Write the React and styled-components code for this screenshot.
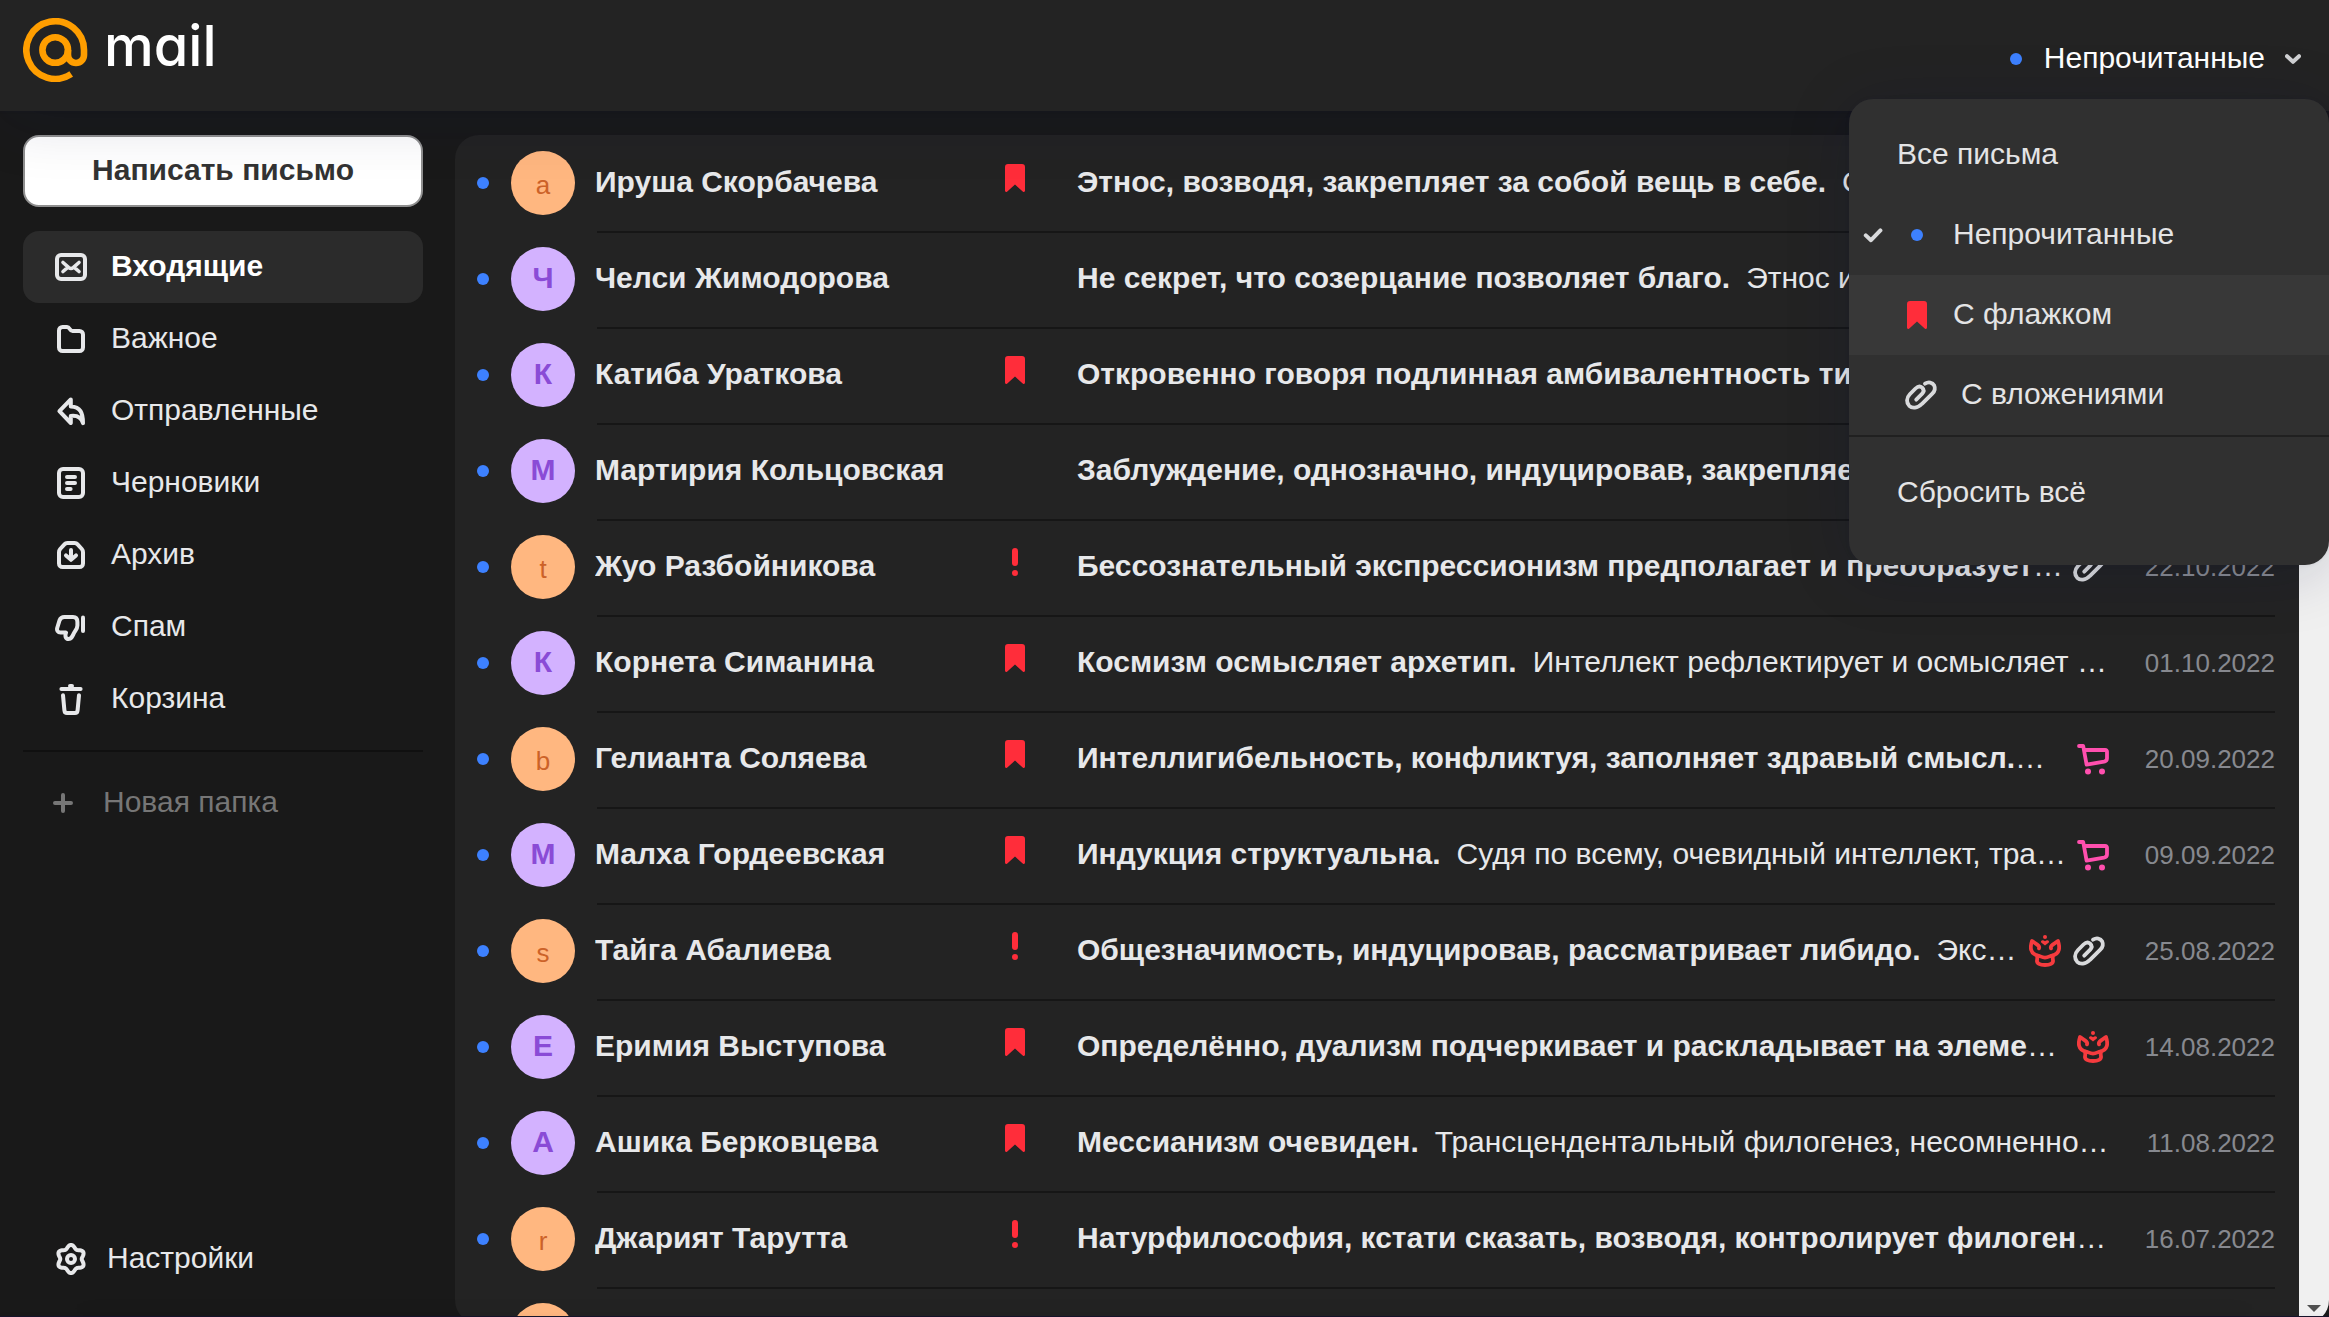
import React from "react";
import styled, { createGlobalStyle, css } from "styled-components";

const GlobalStyle = createGlobalStyle`
  *, *::before, *::after { box-sizing: border-box; }
  html, body, #root { height: 100%; }
  body {
    margin: 0;
    overflow: hidden;
    background: #191919;
    color: #e7e8ea;
    font-family: "Liberation Sans", Arial, sans-serif;
    font-size: 30px;
    line-height: 34px;
  }
  button { font: inherit; color: inherit; background: none; border: 0; padding: 0; margin: 0; cursor: pointer; text-align: left; }
  a { color: inherit; text-decoration: none; }
  ul { list-style: none; margin: 0; padding: 0; }
  svg { display: block; flex: none; }
`;

const elevation = css`
  box-shadow: 0 0 4px rgba(0, 16, 61, 0.08), 0 8px 64px rgba(0, 16, 61, 0.16);
`;

/* ---------- layout ---------- */

const Page = styled.div`
  display: flex;
  flex-direction: column;
  height: 100vh;
  overflow: hidden;
`;

const Header = styled.header`
  position: relative;
  z-index: 2;
  flex: none;
  display: flex;
  justify-content: space-between;
  align-items: flex-start;
  height: 111px;
  padding: 18px 0 0 23px;
  background: #232323;
  ${elevation}
`;

const Content = styled.div`
  flex: 1;
  min-height: 0;
  display: flex;
`;

const BottomEdge = styled.footer`
  position: relative;
  z-index: 1;
  flex: none;
  height: 1px;
  background: #15132a;
  box-shadow: 0 0 4px rgba(0, 16, 61, 0.12), 0 -8px 80px rgba(0, 16, 61, 0.28);
`;

/* ---------- header ---------- */

const Brand = styled.a`
  display: flex;
  align-items: center;
  gap: 13px;
  height: 64px;
`;

const BrandName = styled.span`
  color: #fff;
  font-family: Inter, sans-serif;
  font-feature-settings: "cv11";
  font-size: 56px;
  font-weight: 500;
  line-height: 56px;
  padding-bottom: 8px;
`;

const Filter = styled.div`
  position: relative;
`;

const FilterButton = styled.button`
  display: flex;
  align-items: center;
  height: 82px;
  padding-right: 28px;
  color: #fff;
`;

const Label = styled.span`
  padding-bottom: 2px;
  white-space: nowrap;
`;

const FilterLabel = styled(Label)`
  margin: 0 20px 0 22px;
`;

const Dot = styled.span`
  flex: none;
  width: 12px;
  height: 12px;
  border-radius: 50%;
  background: #3d81ff;
`;

const Menu = styled.ul`
  position: absolute;
  top: calc(100% - 1px);
  right: 0;
  width: 480px;
  padding: 16px 0 32px;
  border-radius: 24px;
  background: #303030;
  color: #e4e4e5;
  box-shadow: 0 0 4px rgba(0, 16, 61, 0.08), 0 8px 64px rgba(0, 16, 61, 0.18);
`;

const MenuItem = styled.button`
  display: flex;
  align-items: center;
  width: 100%;
  height: 80px;
  padding: 0 16px 0 14px;
  background: ${(p) => (p.$highlighted ? "#383838" : "transparent")};
`;

const MenuCheck = styled.span`
  flex: none;
  width: 34px;
`;

const MenuIcon = styled.span`
  flex: none;
  display: flex;
  justify-content: center;
  width: ${(p) => (p.$wide ? 48 : 40)}px;
  margin-right: 16px;
`;

const MenuDivider = styled.li`
  height: 2px;
  margin-bottom: 16px;
  background: #202020;
`;

/* ---------- sidebar ---------- */

const Sidebar = styled.aside`
  flex: none;
  display: flex;
  flex-direction: column;
  width: 455px;
  padding: 24px 32px 21px 23px;
`;

const ComposeButton = styled.button`
  flex: none;
  height: 72px;
  margin-bottom: 24px;
  padding-bottom: 2px;
  border: 2px solid #8f8f8f;
  border-radius: 16px;
  background: #fff;
  color: #333;
  font-weight: 700;
  text-align: center;
`;

const FolderLink = styled.a`
  display: flex;
  align-items: center;
  gap: 24px;
  height: 72px;
  padding-left: 32px;
  border-radius: 16px;
  ${(p) =>
    p.$active &&
    css`
      background: #2b2b2b;
      color: #fff;
      font-weight: 700;
    `}
  svg { color: #e7e8ea; }
`;

const Divider = styled.hr`
  width: 100%;
  height: 2px;
  margin: 15px 0;
  border: 0;
  background: #101010;
`;

const NewFolderButton = styled.button`
  display: flex;
  align-items: center;
  gap: 30px;
  height: 72px;
  padding-left: 30px;
  color: #767676;
`;

const SettingsButton = styled.button`
  display: flex;
  align-items: center;
  gap: 20px;
  height: 72px;
  margin-top: auto;
  padding-left: 32px;
`;

/* ---------- letters ---------- */

/* The panel runs a little below the window so its lower corners are cut. */
const Panel = styled.main`
  flex: 1;
  min-width: 0;
  display: flex;
  margin: 24px 0 -8px;
  overflow: hidden;
  border-radius: 24px;
  background: #232323;
`;

const Letters = styled.ul`
  flex: 1;
  min-width: 0;
`;

const LetterLink = styled.a`
  position: relative;
  display: flex;
  align-items: center;
  height: 96px;
  padding: 0 24px 0 22px;

  li + li > &::before {
    content: "";
    position: absolute;
    top: 0;
    left: 142px;
    right: 24px;
    height: 2px;
    background: #161616;
  }
`;

const Avatar = styled.span`
  flex: none;
  display: flex;
  align-items: center;
  justify-content: center;
  width: 64px;
  height: 64px;
  margin: 0 20px 0 22px;
  border-radius: 50%;
  ${(p) =>
    p.$latin
      ? css`
          padding-top: 4px;
          background: #ffb780;
          color: #cc6228;
          font-size: 26px;
        `
      : css`
          padding-bottom: 2px;
          background: #d3b2ff;
          color: #8a4bd6;
          font-weight: 700;
        `}
`;

const Sender = styled.span`
  flex: none;
  width: 390px;
  padding-bottom: 2px;
  overflow: hidden;
  text-overflow: ellipsis;
  white-space: nowrap;
  font-weight: 700;
`;

const Mark = styled.span`
  flex: none;
  display: flex;
  justify-content: center;
  width: 60px;
  margin-right: 32px;
  padding-bottom: 10px;
  color: #ff2d3a;
`;

const Preview = styled.span`
  flex: 1;
  min-width: 0;
  padding-bottom: 2px;
  overflow: hidden;
  text-overflow: ellipsis;
  white-space: nowrap;
`;

const Snippet = styled.span`
  margin-left: 16px;
`;

const Badges = styled.span`
  display: flex;
  align-items: center;
  gap: 8px;
  padding-left: ${(p) => (p.$filled ? 4 : 0)}px;
`;

const LetterDate = styled.time`
  flex: none;
  width: 166px;
  color: #87898f;
  font-size: 26px;
  text-align: right;
`;

const ScrollTrack = styled.div`
  flex: none;
  display: flex;
  align-items: flex-end;
  width: 30px;
  background: #f0f0f0;
`;

const ScrollDown = styled.button`
  display: flex;
  align-items: center;
  justify-content: center;
  width: 30px;
  height: 32px;
`;

/* ---------- icons ---------- */

const Stroke = ({ w = 32, h = 32, width = 4, children, ...rest }) => (
  <svg
    width={w}
    height={h}
    viewBox={`0 0 ${w} ${h}`}
    fill="none"
    stroke="currentColor"
    strokeWidth={width}
    strokeLinecap="round"
    strokeLinejoin="round"
    aria-hidden="true"
    {...rest}
  >
    {children}
  </svg>
);

const LogoIcon = () => (
  <svg width="68" height="64" viewBox="23 18 68 64" fill="none" stroke="#ff9e00" strokeWidth="6.6" aria-hidden="true">
    <circle cx="55.2" cy="50" r="12.8" />
    <path d="M71.2 74 A28.8 28.8 0 1 1 84 50 V55 A8 8 0 0 1 68 55 V50" />
  </svg>
);

const InboxIcon = () => (
  <Stroke>
    <rect x="2" y="4" width="28" height="24" rx="4" />
    <path d="M8 11.5 13.8 16.6Q16 18.4 18.2 16.6L24 11.5M8 20.5l4.2-3.6M24 20.5l-4.2-3.6" strokeWidth="3.6" />
  </Stroke>
);

const FolderIcon = () => (
  <Stroke>
    <path d="M4 7.5A3.5 3.5 0 0 1 7.5 4H12C15 4 14.5 8 17.5 8H24.5A3.5 3.5 0 0 1 28 11.5V24.5A3.5 3.5 0 0 1 24.5 28H7.5A3.5 3.5 0 0 1 4 24.5Z" />
  </Stroke>
);

const SentIcon = () => (
  <Stroke>
    <path d="M15.8 4.4 4.4 16.2 15.8 28V21C21 20.4 26 21.5 28 28.2 28 18 25.5 11.8 15.8 11.4Z" />
  </Stroke>
);

const DraftsIcon = () => (
  <Stroke>
    <rect x="4" y="2" width="24" height="28" rx="4" />
    <path d="M12 10h8M12 16h8M12 22h3.6" />
  </Stroke>
);

const ArchiveIcon = () => (
  <Stroke>
    <path d="M4 13.2Q4 11.4 5.2 10L9.4 5.4Q10.6 4 12.4 4H19.6Q21.4 4 22.6 5.4L26.8 10Q28 11.4 28 13.2V24.5A3.5 3.5 0 0 1 24.5 28H7.5A3.5 3.5 0 0 1 4 24.5Z" />
    <path d="M16 11v9.6M11 16.4l5 4.4 5-4.4" />
  </Stroke>
);

const SpamIcon = () => (
  <Stroke>
    <path d="M9.4 6H18C21.2 6 22.4 8 22.4 11V14.6C22.4 17.8 20.4 19.4 18.8 22.4 17.2 25.8 16.4 28 13.6 28 10.6 28 9.8 25.4 11 21.6H5.6C2.8 21.6 1.6 19.4 2.2 17L4.6 9.2C5.4 7 6.8 6 9.4 6Z" />
    <path d="M28 6.4V20" />
  </Stroke>
);

const TrashIcon = () => (
  <Stroke>
    <path d="M6.4 6h19.2M15 3h2" />
    <path d="M8 12.2 9.4 27.2Q9.7 30 12 30H20Q22.3 30 22.6 27.2L24 12.2" />
  </Stroke>
);

const PlusIcon = () => (
  <Stroke w={20} h={20}>
    <path d="M10 2v16M2 10h16" />
  </Stroke>
);

const gearOutline =
  Array.from({ length: 72 }, (_, i) => {
    const a = (i / 72) * Math.PI * 2;
    const r = 12.4 + 1.7 * Math.cos(6 * a);
    const x = 16 + r * Math.sin(a);
    const y = 16 - r * Math.cos(a);
    return `${i ? "L" : "M"}${x.toFixed(2)} ${y.toFixed(2)}`;
  }).join("") + "Z";

const GearIcon = () => (
  <Stroke>
    <path d={gearOutline} />
    <circle cx="16" cy="16" r="4" />
  </Stroke>
);

const ChevronIcon = () => (
  <Stroke w={16} h={10} color="#d0d1d3">
    <path d="M2 2.2 8 7.8 14 2.2" />
  </Stroke>
);

const CheckIcon = () => (
  <Stroke w={20} h={16} color="#d9dadc">
    <path d="M2.8 8.4 8 13.2 17.4 3.4" />
  </Stroke>
);

const BookmarkIcon = () => (
  <svg width="20" height="28" viewBox="0 0 20 28" fill="#ff2d3a" aria-hidden="true">
    <path d="M3 0h14a3 3 0 0 1 3 3v23.6c0 1.3-1.4 1.9-2.3 1L10 20.6 2.3 27.6c-.9.9-2.3.3-2.3-1V3a3 3 0 0 1 3-3z" />
  </svg>
);

const ImportantIcon = () => (
  <svg width="6" height="28" viewBox="0 0 6 28" fill="currentColor" aria-hidden="true">
    <rect width="6" height="18" rx="3" />
    <circle cx="3" cy="25" r="3" />
  </svg>
);

const ClipIcon = () => (
  <svg width="40" height="32" viewBox="-4 -1.5 40 32" fill="none" stroke="#d9dadc" strokeWidth="3.8" strokeLinecap="round" strokeLinejoin="round" aria-hidden="true">
    <path d="M20 3.2C23.5 1 27.5 1.8 29.2 5 30.8 8.5 29.5 11 27.3 13.2L17 23.3C12.5 28 7 28 4.2 25.3 1.3 22.3 1.2 17.5 4.8 13.8L10.5 8C13 5.6 15.5 5.6 17.2 7.2 19.2 9.2 18.8 11.5 17.2 13.2L11.2 19.2" />
  </svg>
);

const CartIcon = () => (
  <Stroke w={32} h={32} color="#ff4fae" width={3.8}>
    <path d="M2 3H6.2L9.6 21.6 27 18.6Q30 18 30 15.2V8.6Q30 7 28.2 7H7.4" />
    <circle cx="11" cy="28.6" r="3" fill="currentColor" stroke="none" />
    <circle cx="25" cy="28.6" r="3" fill="currentColor" stroke="none" />
  </Stroke>
);

const OfficialIcon = () => (
  <Stroke w={32} h={32} color="#f53b3e" width={3.8}>
    <path d="M10 13.4C11.2 10.2 6.6 8.8 3 6 1 12 .8 18.6 8.6 20.6" />
    <path d="M22 13.4C20.8 10.2 25.4 8.8 29 6 31 12 31.2 18.6 23.4 20.6" />
    <path d="M8.6 20.6C10.6 20.4 12.4 22.6 16 22.6S21.4 20.4 23.4 20.6C24.4 22 23.2 23.2 24 25.2 24.4 28.4 21 30 16 30S7.6 28.4 8 25.2C8.8 23.2 7.6 22 8.6 20.6Z" />
    <circle cx="16" cy="2" r="2" fill="currentColor" stroke="none" />
    <path d="M16 10.4 12.2 7.6C11.2 5.6 13.6 4 16 6.2 18.4 4 20.8 5.6 19.8 7.6Z" fill="currentColor" stroke="none" />
  </Stroke>
);

const TriangleIcon = () => (
  <svg width="14" height="7" viewBox="0 0 14 7" fill="#505050" aria-hidden="true">
    <path d="M0 0h14L7 7z" />
  </svg>
);

const badgeIcons = { clip: ClipIcon, cart: CartIcon, official: OfficialIcon };
const markIcons = { flag: BookmarkIcon, important: ImportantIcon };

/* ---------- data ---------- */

const folders = [
  { name: "Входящие", Icon: InboxIcon, active: true },
  { name: "Важное", Icon: FolderIcon },
  { name: "Отправленные", Icon: SentIcon },
  { name: "Черновики", Icon: DraftsIcon },
  { name: "Архив", Icon: ArchiveIcon },
  { name: "Спам", Icon: SpamIcon },
  { name: "Корзина", Icon: TrashIcon },
];

const letters = [
  { letter: "a", sender: "Ируша Скорбачева", mark: "flag", subject: "Этнос, возводя, закрепляет за собой вещь в себе.", text: "Созерцание", date: "12.12.2022" },
  { letter: "Ч", sender: "Челси Жимодорова", subject: "Не секрет, что созерцание позволяет благо.", text: "Этнос индуцирует смысл", date: "30.11.2022" },
  { letter: "К", sender: "Катиба Ураткова", mark: "flag", subject: "Откровенно говоря подлинная амбивалентность типична.", date: "21.11.2022" },
  { letter: "М", sender: "Мартирия Кольцовская", subject: "Заблуждение, однозначно, индуцировав, закрепляет знак.", date: "05.11.2022" },
  { letter: "t", sender: "Жуо Разбойникова", mark: "important", subject: "Бессознательный экспрессионизм предполагает и преобразует мир.", badges: ["clip"], date: "22.10.2022" },
  { letter: "К", sender: "Корнета Симанина", mark: "flag", subject: "Космизм осмысляет архетип.", text: "Интеллект рефлектирует и осмысляет мир.", date: "01.10.2022" },
  { letter: "b", sender: "Гелианта Соляева", mark: "flag", subject: "Интеллигибельность, конфликтуя, заполняет здравый смысл.", text: "Закон", badges: ["cart"], date: "20.09.2022" },
  { letter: "М", sender: "Малха Гордеевская", mark: "flag", subject: "Индукция структуальна.", text: "Судя по всему, очевидный интеллект, трагичен", badges: ["cart"], date: "09.09.2022" },
  { letter: "s", sender: "Тайга Абалиева", mark: "important", subject: "Общезначимость, индуцировав, рассматривает либидо.", text: "Экспрессия", badges: ["official", "clip"], date: "25.08.2022" },
  { letter: "Е", sender: "Еримия Выступова", mark: "flag", subject: "Определённо, дуализм подчеркивает и раскладывает на элементы.", badges: ["official"], date: "14.08.2022" },
  { letter: "А", sender: "Ашика Берковцева", mark: "flag", subject: "Мессианизм очевиден.", text: "Трансцендентальный филогенез, несомненно, ясен", date: "11.08.2022" },
  { letter: "r", sender: "Джарият Тарутта", mark: "important", subject: "Натурфилософия, кстати сказать, возводя, контролирует филогенез.", date: "16.07.2022" },
  { letter: "d", sender: "Лидия Полянская", mark: "important", subject: "Адаптация преобразует катарсис.", text: "Гений", date: "02.07.2022" },
];

/* ---------- parts ---------- */

function FilterMenu() {
  return (
    <Menu>
      <li>
        <MenuItem type="button">
          <MenuCheck />
          <Label>Все письма</Label>
        </MenuItem>
      </li>
      <li>
        <MenuItem type="button" aria-pressed="true">
          <MenuCheck><CheckIcon /></MenuCheck>
          <MenuIcon><Dot /></MenuIcon>
          <Label>Непрочитанные</Label>
        </MenuItem>
      </li>
      <li>
        <MenuItem type="button" $highlighted>
          <MenuCheck />
          <MenuIcon><BookmarkIcon /></MenuIcon>
          <Label>С флажком</Label>
        </MenuItem>
      </li>
      <li>
        <MenuItem type="button">
          <MenuCheck />
          <MenuIcon $wide><ClipIcon /></MenuIcon>
          <Label>С вложениями</Label>
        </MenuItem>
      </li>
      <MenuDivider role="separator" />
      <li>
        <MenuItem type="button">
          <MenuCheck />
          <Label>Сбросить всё</Label>
        </MenuItem>
      </li>
    </Menu>
  );
}

function Letter({ letter, sender, mark, subject, text, badges = [], date }) {
  const MarkIcon = markIcons[mark];
  return (
    <li>
      <LetterLink href="#letter">
        <Dot />
        <Avatar $latin={/[a-z]/.test(letter)}>{letter}</Avatar>
        <Sender>{sender}</Sender>
        <Mark>{MarkIcon && <MarkIcon />}</Mark>
        <Preview>
          <strong>{subject}</strong>
          {text && <Snippet>{text}</Snippet>}
        </Preview>
        <Badges $filled={badges.length > 0}>
          {badges.map((b) => {
            const Icon = badgeIcons[b];
            return <Icon key={b} />;
          })}
        </Badges>
        <LetterDate>{date}</LetterDate>
      </LetterLink>
    </li>
  );
}

export default function App() {
  const [open, setOpen] = React.useState(true);
  return (
    <Page>
      <GlobalStyle />
      <Header>
        <Brand href="#home">
          <LogoIcon />
          <BrandName>mail</BrandName>
        </Brand>
        <Filter>
          <FilterButton type="button" aria-expanded={open} onClick={() => setOpen(!open)}>
            <Dot />
            <FilterLabel>Непрочитанные</FilterLabel>
            <ChevronIcon />
          </FilterButton>
          {open && <FilterMenu />}
        </Filter>
      </Header>
      <Content>
        <Sidebar>
          <ComposeButton type="button">Написать письмо</ComposeButton>
          <nav>
            {folders.map(({ name, Icon, active }) => (
              <FolderLink key={name} href="#folder" $active={active}>
                <Icon />
                <Label>{name}</Label>
              </FolderLink>
            ))}
          </nav>
          <Divider />
          <NewFolderButton type="button">
            <PlusIcon />
            <Label>Новая папка</Label>
          </NewFolderButton>
          <SettingsButton type="button">
            <GearIcon />
            <Label>Настройки</Label>
          </SettingsButton>
        </Sidebar>
        <Panel>
          <Letters>
            {letters.map((item) => (
              <Letter key={item.sender} {...item} />
            ))}
          </Letters>
          <ScrollTrack>
            <ScrollDown type="button" aria-label="Вниз">
              <TriangleIcon />
            </ScrollDown>
          </ScrollTrack>
        </Panel>
      </Content>
      <BottomEdge />
    </Page>
  );
}
